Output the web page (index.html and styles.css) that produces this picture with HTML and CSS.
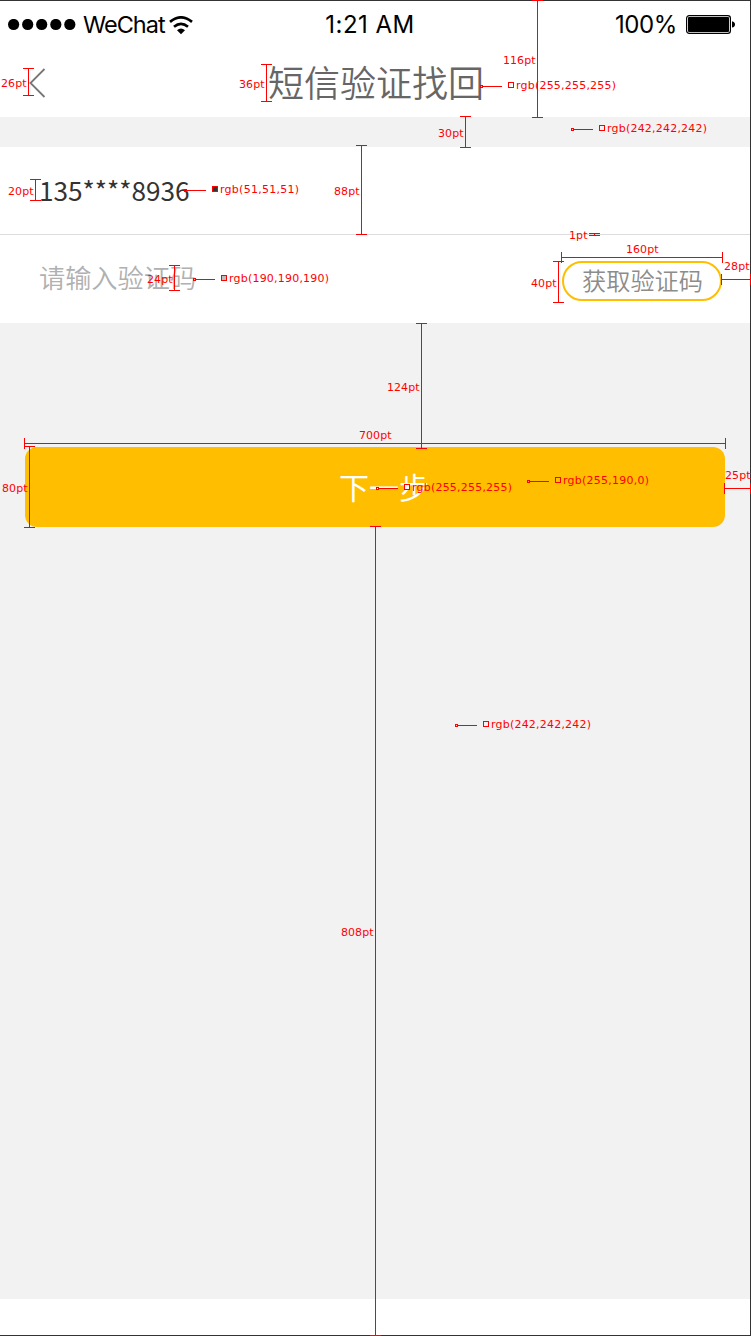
FILE: index.html
```html
<!DOCTYPE html>
<html lang="zh-CN">
<head>
<meta charset="utf-8">
<title>短信验证找回</title>
<link rel="stylesheet" href="styles.css">
</head>
<body>
<div class="screen">
  <header class="header">
    <div class="status">
      <div class="status-left">
        <svg class="signal" width="68" height="12" viewBox="0 0 68 12"><circle cx="5.6" cy="5.5" r="5.6"/><circle cx="19.7" cy="5.5" r="5.6"/><circle cx="33.7" cy="5.5" r="5.6"/><circle cx="47.8" cy="5.5" r="5.6"/><circle cx="61.8" cy="5.5" r="5.6"/></svg>
        <span class="carrier">WeChat</span>
        <svg class="wifi" width="24" height="19" viewBox="0 0 24 19"><path d="M1 5.9Q12 -3.2 23 5.9" fill="none" stroke="#000" stroke-width="2.7"/><path d="M5 10.7Q12 4.9 19 10.7" fill="none" stroke="#000" stroke-width="2.6"/><path d="M8 14.2Q12 10.6 16 14.2L12 18.2Z"/></svg>
      </div>
      <span class="clock">1:21 AM</span>
      <div class="status-right">
        <span class="percent">100%</span>
        <svg width="50" height="20" viewBox="0 0 50 20"><rect x=".6" y=".6" width="43.8" height="17.8" rx="2.6" fill="none" stroke="#000" stroke-width="1.2"/><rect x="2" y="2" width="41" height="15" rx="1"/><path d="M46 6.2Q49 7 49 9.4Q49 11.8 46 12.6Z"/></svg>
      </div>
    </div>
    <div class="nav">
      <svg class="back" width="17" height="30" viewBox="0 0 17 30"><path d="M15.5 1L1.5 15L15.5 29" fill="none" stroke="#777" stroke-width="1.8"/></svg>
      <h1 class="title">短信验证找回</h1>
    </div>
  </header>
  <main class="form">
    <div class="row row-phone"><span class="phone">135****8936</span></div>
    <div class="row row-code"><span class="placeholder">请输入验证码</span><button class="get-code">获取验证码</button></div>
    <button class="next">下一步</button>
  </main>
  <footer class="footer"></footer>
</div>

<svg class="specs" width="751" height="1336" viewBox="0 0 751 1336">
  <defs>
    <g id="pin"><path class="line" d="M-.5 -.5h2v2h-2zM2 .5H21"/></g>
  </defs>
  <!-- dimension lines -->
  <path class="line" d="M537.5 0V117M532 .5h11M532 117.5h11
    M266.5 64V102M261 64.5h11M261 101.5h11
    M28.5 68V96M23 68.5h11M23 95.5h11
    M465.5 116V148M460 116.5h11M460 147.5h11
    M361.5 145V235M356 145.5h11M356 234.5h11
    M35.5 179V201M30 179.5h11M30 200.5h11
    M174.5 265V291M169 265.5h11M169 290.5h11
    M589 233.5h11M589 235.5h11M594.5 233v3
    M561 257.5H723M561.5 252v11M722.5 252v11
    M558.5 261V303M553 261.5h11M553 302.5h11
    M721 279.5H751M721.5 274v11M750.5 274v11
    M421.5 323V449M416 323.5h11M416 448.5h11
    M24 443.5H726M24.5 438v11M725.5 438v11
    M29.5 446V528M24 446.5h11M24 527.5h11
    M724 488.5H751M724.5 483v11M750.5 483v11
    M375.5 526V1336M370 526.5h11M370 1335.5h11"/>
  <g class="label">
    <text x="503" y="64" textLength="32.5">116pt</text>
    <text x="239" y="88" textLength="25.5">36pt</text>
    <text x="1" y="87" textLength="25.5">26pt</text>
    <text x="438" y="137" textLength="25.5">30pt</text>
    <text x="334" y="195" textLength="25.5">88pt</text>
    <text x="8" y="195" textLength="25.5">20pt</text>
    <text x="147" y="283" textLength="25.5">24pt</text>
    <text x="569" y="239" textLength="18.5">1pt</text>
    <text x="626" y="253" textLength="32.5">160pt</text>
    <text x="531" y="287" textLength="25.5">40pt</text>
    <text x="724" y="270" textLength="25.5">28pt</text>
    <text x="387" y="391" textLength="32.5">124pt</text>
    <text x="359" y="439" textLength="32.5">700pt</text>
    <text x="2" y="492" textLength="25.5">80pt</text>
    <text x="725" y="479" textLength="25.5">25pt</text>
    <text x="341" y="936" textLength="32.5">808pt</text>
  </g>
  <!-- colour callouts -->
  <g class="label">
    <g transform="translate(481 86)"><use href="#pin"/><rect class="swatch" x="27.5" y="-3.5" width="5" height="5" fill="#fff"/><text x="35" y="3" textLength="100">rgb(255,255,255)</text></g>
    <g transform="translate(572 129)"><use href="#pin"/><rect class="swatch" x="27.5" y="-3.5" width="5" height="5" fill="#f2f2f2"/><text x="35" y="3" textLength="100">rgb(242,242,242)</text></g>
    <g transform="translate(185 190)"><use href="#pin"/><rect class="swatch" x="27.5" y="-3.5" width="5" height="5" fill="#333"/><text x="35" y="3" textLength="79">rgb(51,51,51)</text></g>
    <g transform="translate(194 279)"><use href="#pin"/><rect class="swatch" x="27.5" y="-3.5" width="5" height="5" fill="#bebebe"/><text x="35" y="3" textLength="100">rgb(190,190,190)</text></g>
    <g transform="translate(377 488)"><use href="#pin"/><rect class="swatch" x="27.5" y="-3.5" width="5" height="5" fill="#fff"/><text x="35" y="3" textLength="100">rgb(255,255,255)</text></g>
    <g transform="translate(528 481)"><use href="#pin"/><rect class="swatch" x="27.5" y="-3.5" width="5" height="5" fill="#ffbe00"/><text x="35" y="3" textLength="86">rgb(255,190,0)</text></g>
    <g transform="translate(456 725)"><use href="#pin"/><rect class="swatch" x="27.5" y="-3.5" width="5" height="5" fill="#f2f2f2"/><text x="35" y="3" textLength="100">rgb(242,242,242)</text></g>
  </g>
</svg>
</body>
</html>
```
FILE: styles.css
```css
* { box-sizing: border-box; }
body { margin: 0; position: relative; width: 751px; height: 1336px; overflow: hidden; background: #fff; font-family: "Noto Sans CJK SC", sans-serif; }
.screen { display: flex; flex-direction: column; width: 751px; height: 1336px; border: solid #333; border-width: 1px 1px 1px 0; }
.header { height: 116px; background: #fff; }
.status { display: grid; grid-template-columns: 1fr auto 1fr; align-items: center; height: 48px; padding: 0 14px 0 8px; font: 24px/48px Inter, sans-serif; color: #000; }
.status-left, .status-right { display: flex; align-items: center; }
.status-right { justify-content: flex-end; gap: 9px; }
.carrier { margin-left: 7px; width: 82px; font-size: 23.5px; letter-spacing: -1px; white-space: nowrap; }
.wifi { margin-left: 4px; }
.clock { margin-right: 4px; letter-spacing: 0.5px; }
.percent { letter-spacing: -0.4px; }
.nav { display: grid; grid-template-columns: 1fr auto 1fr; align-items: center; height: 68px; padding-left: 29px; padding-right: 27px; }
.title { margin: 0; padding-bottom: 4px; font-size: 36px; line-height: 52px; font-weight: 350; color: #666; }
.form { height: 1182px; padding-top: 30px; background: #f2f2f2; }
.row { display: flex; align-items: center; background: #fff; padding-left: 39px; padding-right: 28px; }
.row-phone { height: 88px; border-bottom: 1px solid #ddd; }
.row-code { height: 88px; justify-content: space-between; }
.phone { padding-bottom: 2px; font-size: 26.2px; line-height: 38px; color: #333; }
.placeholder { padding-bottom: 5px; font-size: 26.2px; line-height: 38px; font-weight: 350; color: #b0b0b0; }
.get-code { width: 160px; height: 40px; margin-top: 4px; padding: 0 0 2px 1px; border: 2px solid #ffbe00; border-radius: 20px; background: #fff; font: 350 24.2px/34px "Noto Sans CJK SC", sans-serif; color: #8c8c8c; }
.next { display: block; width: 700px; height: 80px; margin: 124px 0 0 25px; padding: 0 0 3px 18px; border: 0; border-radius: 12px; background: #ffbe00; color: #fff; font: 30px/44px "Noto Sans CJK SC", sans-serif; }
.footer { flex: 1; background: #fff; }
/* measurement layer drawn over the screen */
.specs { position: absolute; left: 0; top: 0; }
.line { fill: none; stroke: #f00; stroke-width: 1; shape-rendering: crispEdges; }
.swatch { stroke: #f00; stroke-width: 1; shape-rendering: crispEdges; }
.label { font: 11px "DejaVu Sans", sans-serif; fill: #f00; }
```
